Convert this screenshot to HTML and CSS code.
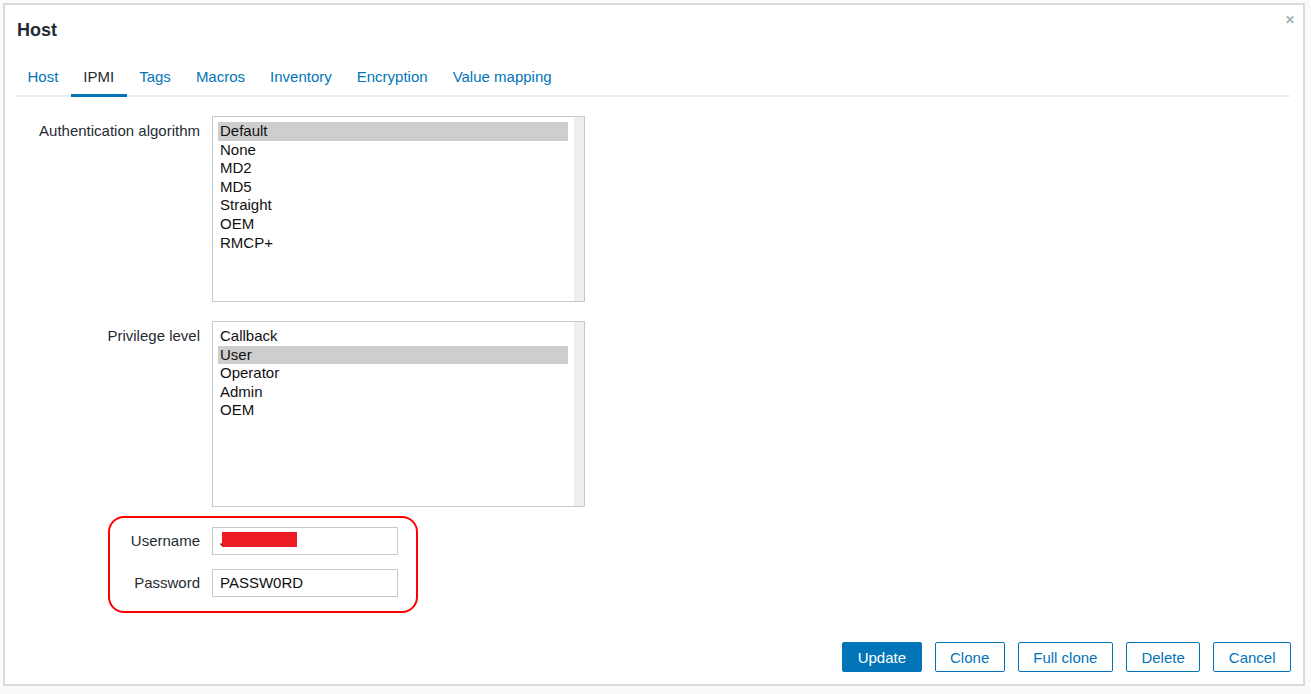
FILE: index.html
```html
<!DOCTYPE html>
<html>
<head>
    <title>Host</title>
    <link rel="stylesheet" href="styles.css">
</head>
<body>
    <div class="dialog">
        <div class="dialog-header">
            <h4>Host</h4>
            <span class="close">&#x2715;</span>
        </div>

        <ul class="tabs">
            <li>Host</li>
            <li class="active">IPMI</li>
            <li>Tags</li>
            <li>Macros</li>
            <li>Inventory</li>
            <li>Encryption</li>
            <li>Value mapping</li>
        </ul>

        <div class="form">
            <div class="row">
                <label>Authentication algorithm</label>
                <div class="listbox">
                    <div class="options">
                        <div class="opt selected">Default</div>
                        <div class="opt">None</div>
                        <div class="opt">MD2</div>
                        <div class="opt">MD5</div>
                        <div class="opt">Straight</div>
                        <div class="opt">OEM</div>
                        <div class="opt">RMCP+</div>
                    </div>
                    <div class="track"></div>
                </div>
            </div>

            <div class="row">
                <label>Privilege level</label>
                <div class="listbox">
                    <div class="options">
                        <div class="opt">Callback</div>
                        <div class="opt selected">User</div>
                        <div class="opt">Operator</div>
                        <div class="opt">Admin</div>
                        <div class="opt">OEM</div>
                    </div>
                    <div class="track"></div>
                </div>
            </div>

            <div class="credentials">
                <div class="row row-input">
                    <label>Username</label>
                    <div class="textbox">J<span class="redact"></span></div>
                </div>
                <div class="row row-input">
                    <label>Password</label>
                    <div class="textbox">PASSW0RD</div>
                </div>
                <div class="highlight"></div>
            </div>
        </div>

        <div class="buttons">
            <button class="primary">Update</button>
            <button>Clone</button>
            <button>Full clone</button>
            <button>Delete</button>
            <button>Cancel</button>
        </div>
    </div>
</body>
</html>
```

FILE: styles.css
```css
body {
    margin: 0;
    background: #fafafa;
    font-family: "Liberation Sans", Arial, sans-serif;
    font-size: 15px;
    color: #1f2c33;
}
.dialog {
    margin: 3px 0 0 3px;
    width: 1298px;
    height: 679px;
    background: white;
    border: 2px solid #d5dce0;
    display: flex;
    flex-direction: column;
}
.dialog-header {
    display: flex;
    justify-content: space-between;
    padding: 15px 8px 0 12px;
}
.dialog-header h4 {
    margin: 0;
    font-size: 18px;
    font-weight: bold;
    line-height: 20px;
}
.close {
    color: #a5b0b6;
    font-size: 12px;
    font-weight: bold;
    margin-top: -7px;
}
.tabs {
    list-style: none;
    margin: 24px 13px 0 10px;
    padding: 0;
    display: flex;
    border-bottom: 2px solid #ebeef0;
}
.tabs li {
    padding: 0 12.5px;
    height: 33px;
    line-height: 25px;
    color: #0275b8;
    margin-bottom: -2px;
}
.tabs li.active {
    color: #1f2c33;
    border-bottom: 3px solid #0275b8;
    height: 30px;
}
.form {
    padding-top: 19px;
    display: flex;
    flex-direction: column;
    gap: 19px;
}
.row {
    display: flex;
    gap: 12px;
}
.row label {
    width: 195px;
    text-align: right;
    padding-top: 6px;
    flex-shrink: 0;
}
.listbox {
    width: 371px;
    height: 184px;
    border: 1px solid #bfcbd1;
    display: flex;
}
.options {
    flex: 1;
    padding: 5px 6px 0 5px;
    color: #111;
}
.opt {
    padding-left: 2px;
    height: 18.6px;
    line-height: 18.6px;
}
.opt.selected {
    background: #cecece;
}
.track {
    width: 10px;
    background: #eeeeee;
}
.credentials {
    position: relative;
    display: flex;
    flex-direction: column;
    gap: 14px;
    padding-top: 1px;
}
.row-input label {
    padding-top: 5px;
}
.textbox {
    width: 177px;
    height: 26px;
    border: 1px solid #bfcbd1;
    padding-left: 7px;
    line-height: 26px;
    color: #111;
    position: relative;
}
.redact {
    position: absolute;
    left: 9px;
    top: 4px;
    width: 75px;
    height: 15px;
    background: #ed1c24;
}
.highlight {
    position: absolute;
    left: 103px;
    top: -10px;
    width: 306px;
    height: 93px;
    border: 2px solid #ff0000;
    border-radius: 16px;
}
.buttons {
    margin-top: auto;
    display: flex;
    justify-content: flex-end;
    gap: 13px;
    padding: 0 12px 12px 0;
}
button {
    font-family: "Liberation Sans", Arial, sans-serif;
    font-size: 15px;
    height: 30px;
    padding: 0 14.5px;
    background: white;
    color: #0275b8;
    border: 1px solid #0275b8;
    border-radius: 2px;
}
button.primary {
    background: #0275b8;
    color: white;
}
```
